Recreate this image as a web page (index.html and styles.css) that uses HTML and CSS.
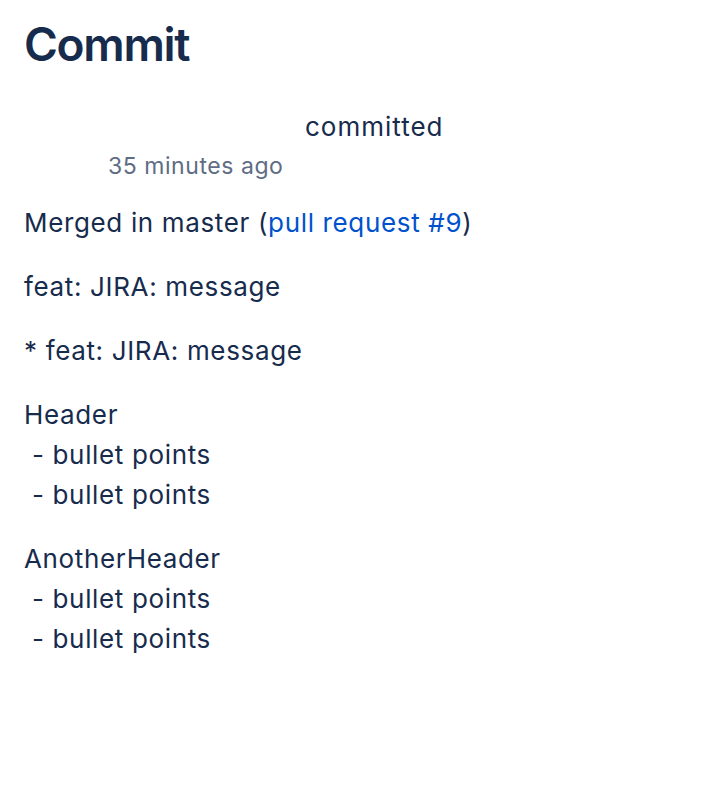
FILE: index.html
```html
<!DOCTYPE html>
<html>
<head>
<meta charset="utf-8">
<link rel="stylesheet" href="styles.css">
</head>
<body>
<main class="page">
  <h1 class="title">Commit</h1>
  <div class="meta">
    <div class="author-line"><span class="author"></span><span class="action">committed</span></div>
    <div class="time">35 minutes ago</div>
  </div>
  <div class="message">
    <p>Merged in master (<a href="#" class="link">pull request #9</a>)</p>
    <p>feat: JIRA: message</p>
    <p>* feat: JIRA: message</p>
    <p>Header<br>&nbsp;- bullet points<br>&nbsp;- bullet points</p>
    <p>AnotherHeader<br>&nbsp;- bullet points<br>&nbsp;- bullet points</p>
  </div>
</main>
</body>
</html>
```

FILE: styles.css
```css
html, body {
  margin: 0;
  padding: 0;
  background: #ffffff;
}
body {
  font-family: Inter, "Noto Sans", sans-serif;
  color: #172B4D;
}
.page {
  padding: 0 24px;
}
.title {
  margin: 0;
  padding-top: 16px;
  font-size: 46px;
  line-height: 56px;
  font-weight: 600;
  letter-spacing: -1.3px;
  color: #172B4D;
}
.meta {
  margin-top: 39px;
}
.author-line {
  display: flex;
  padding-left: 281px;
  font-size: 26px;
  line-height: 32px;
  letter-spacing: 1px;
}
.time {
  margin-top: 3px;
  padding-left: 84px;
  font-size: 23px;
  line-height: 40px;
  letter-spacing: 0.55px;
  color: #5E6C84;
}
.message {
  margin-top: 17px;
  font-size: 26px;
  line-height: 40px;
  letter-spacing: 0.65px;
}
.message p {
  margin: 0 0 24px 0;
}
.link {
  color: #0052CC;
  text-decoration: none;
}
```
